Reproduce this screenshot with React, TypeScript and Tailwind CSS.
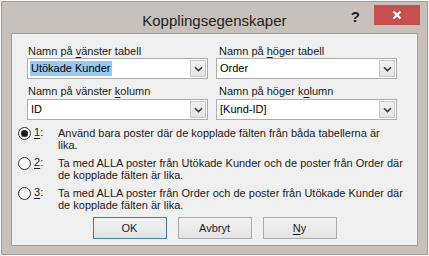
import React from "react";

const font = { fontFamily: '"Liberation Sans", Arial, sans-serif' };

const Chevron = () => (
  <svg width="9" height="6" viewBox="0 0 9 6" className="block">
    <path d="M1 1.2 L4.5 4.6 L8 1.2" fill="none" stroke="#3a3a3a" strokeWidth="1.6" />
  </svg>
);

const Combo = ({ value, selected = false }: { value: string; selected?: boolean }) => (
  <div className="h-[21px] w-[181px] flex items-center border border-[#abadb3] bg-white pl-[2px] pr-[1px]">
    <div className="flex-1 flex items-center min-w-0">
      <span
        className={
          selected
            ? "bg-[#99c9ef] text-black px-px leading-[15px]"
            : "text-black px-px leading-[15px]"
        }
      >
        {value}
      </span>
    </div>
    <div className="w-[16px] h-[17px] flex items-center justify-center border border-[#c7c7c7] bg-gradient-to-b from-[#f2f2f2] to-[#e4e4e4]">
      <Chevron />
    </div>
  </div>
);

const Radio = ({ checked = false }: { checked?: boolean }) => (
  <div className="w-[13px] h-[13px] rounded-full border border-[#333] bg-[#f8f8f8] flex items-center justify-center shrink-0">
    {checked && <div className="w-[7px] h-[7px] rounded-full bg-[#1a1a1a]" />}
  </div>
);

const options = [
  {
    n: "1",
    checked: true,
    lines: ["Använd bara poster där de kopplade fälten från båda tabellerna är", "lika."],
  },
  {
    n: "2",
    checked: false,
    lines: ["Ta med ALLA poster från Utökade Kunder och de poster från Order där", "de kopplade fälten är lika."],
  },
  {
    n: "3",
    checked: false,
    lines: ["Ta med ALLA poster från Order och de poster från Utökade Kunder där", "de kopplade fälten är lika."],
  },
];

export default function App() {
  return (
    <div className="w-[429px] h-[256px] bg-[#f7f7f7] p-px text-[11px] text-[#1b1b1b]" style={font}>
      <div className="h-full border border-[#9d9d9d] bg-[#c8c1bb] flex flex-col">
        {/* title bar */}
        <div className="h-[31px] shrink-0 flex items-start">
          <div className="flex-1 pt-[9px] pl-[76px] text-center text-[15px] leading-[20px] text-[#222]">
            Kopplingsegenskaper
          </div>
          <div className="pt-[6px] pr-[14px] text-[15px] font-bold leading-[18px] text-[#222]">?</div>
          <div className="w-[46px] h-[20px] mt-[3px] mr-[7px] bg-[#c75050] flex items-center justify-center">
            <svg width="10" height="10" viewBox="0 0 10 10">
              <path d="M1.5 1.5 L8.5 8.5 M8.5 1.5 L1.5 8.5" stroke="#fff" strokeWidth="2.2" />
            </svg>
          </div>
        </div>

        {/* client area */}
        <div className="mx-[9px] mb-[8px] flex-1 border border-[#a49d97] bg-[#f0f0f0] flex flex-col pt-[10px]">
          <div className="flex gap-[8px] pl-[15px]">
            <div className="flex flex-col">
              <div className="pl-px leading-[14px] h-[14px]">
                Namn på <span className="underline underline-offset-2">v</span>änster tabell
              </div>
              <Combo value="Utökade Kunder" selected />
              <div className="pl-px leading-[14px] h-[14px] mt-[5px] mb-px">
                Namn på vänster <span className="underline underline-offset-2">k</span>olumn
              </div>
              <Combo value="ID" />
            </div>
            <div className="flex flex-col">
              <div className="pl-[3px] leading-[14px] h-[14px]">
                Namn på <span className="underline underline-offset-2">h</span>öger tabell
              </div>
              <Combo value="Order" />
              <div className="pl-[3px] leading-[14px] h-[14px] mt-[5px] mb-px">
                Namn på höger k<span className="underline underline-offset-2">o</span>lumn
              </div>
              <Combo value="[Kund-ID]" />
            </div>
          </div>

          <div className="flex flex-col gap-[5px] mt-[6px] pl-[6px]">
            {options.map((o) => (
              <div key={o.n} className="flex items-start">
                <div className="pt-px">
                  <Radio checked={o.checked} />
                </div>
                <div className="w-[27px] pl-[3px] leading-[13px]">
                  <span className="underline underline-offset-2">{o.n}</span>:
                </div>
                <div className="leading-[12px] whitespace-nowrap pt-px">
                  {o.lines[0]}
                  <br />
                  {o.lines[1]}
                </div>
              </div>
            ))}
          </div>

          <div className="flex justify-center gap-[11px] mt-[6px]">
            <button className="w-[74px] h-[22px] border border-[#3c7fb1] bg-gradient-to-b from-[#f2f2f2] to-[#e3e3e3] text-[11px] text-[#1b1b1b]">
              OK
            </button>
            <button className="w-[74px] h-[22px] border border-[#acacac] bg-gradient-to-b from-[#f2f2f2] to-[#e3e3e3] text-[11px] text-[#1b1b1b]">
              Avbryt
            </button>
            <button className="w-[74px] h-[22px] border border-[#acacac] bg-gradient-to-b from-[#f2f2f2] to-[#e3e3e3] text-[11px] text-[#1b1b1b]">
              <span className="underline underline-offset-2">N</span>y
            </button>
          </div>
        </div>
      </div>
    </div>
  );
}
